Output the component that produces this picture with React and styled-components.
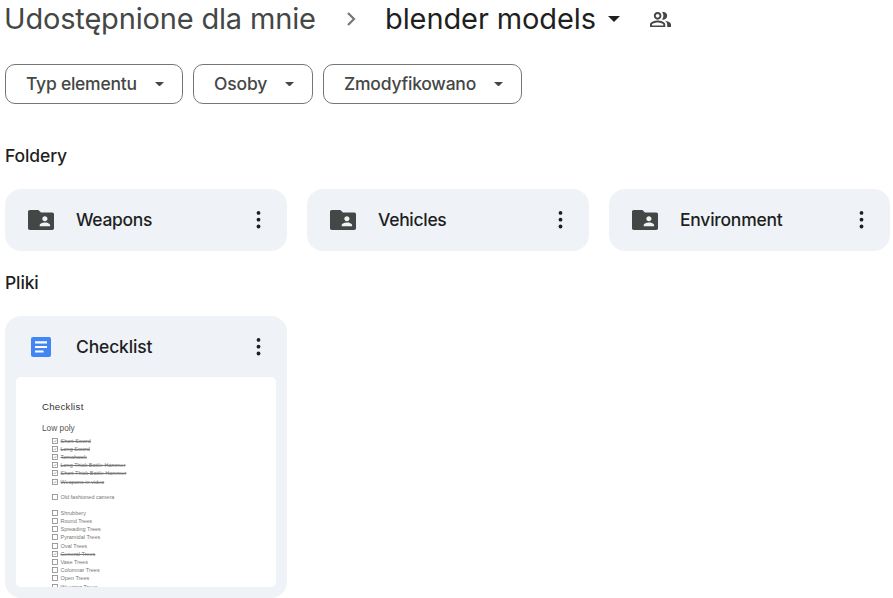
import React from 'react';
import styled, { createGlobalStyle } from 'styled-components';

const GlobalStyle = createGlobalStyle`
  * { box-sizing: border-box; }
  html, body { margin: 0; overflow: hidden; background: #fff; }
  body { font-family: Inter, Roboto, sans-serif; color: #1f1f1f; }
  button { font: inherit; color: inherit; background: none; border: 0; padding: 0; }
`;

const Page = styled.main`
  width: 893px;
  height: 598px;
  padding: 0 3px 0 5px;
  overflow: hidden;
`;

const Breadcrumbs = styled.nav`
  display: flex;
  align-items: center;
  height: 38px;
  font-size: 29px;
  line-height: 38px;
  white-space: nowrap;
`;

const ParentCrumb = styled.a`
  width: 343px;
  margin-left: -1px;
  color: #444746;
  letter-spacing: -0.17px;
`;

const CurrentCrumb = styled.h1`
  margin: 0 0 0 29px;
  width: 223px;
  font-size: 29px;
  font-weight: 400;
  letter-spacing: -0.1px;
`;

const Icon = styled.svg`
  display: block;
  flex: none;
  fill: currentColor;
`;

const ShareButton = styled.button`
  margin: 1px 0 0 30px;
  color: #444746;
`;

const Filters = styled.div`
  display: flex;
  gap: 10px;
  margin-top: 26px;
`;

const Chip = styled.button`
  display: flex;
  align-items: center;
  justify-content: space-between;
  width: ${(p) => p.$width}px;
  height: 40px;
  padding: 0 18px 0 20px;
  border: 1px solid #747775;
  border-radius: 10px;
  color: #444746;
  font-size: 17.5px;
  font-weight: 500;
  letter-spacing: ${(p) => p.$spacing}px;
  white-space: nowrap;
`;

const ChipLabel = styled.span`
  padding-bottom: 2px;
`;

const SectionTitle = styled.h2`
  margin: ${(p) => p.$top}px 0 0;
  height: 24px;
  font-size: 17.5px;
  font-weight: 500;
  line-height: 24px;
  letter-spacing: -0.12px;
`;

const CardGrid = styled.div`
  display: grid;
  grid-template-columns: 282px 282px 281px;
  gap: 20px;
  margin-top: 21px;
`;

const Card = styled.article`
  overflow: hidden;
  border-radius: 16px;
  background: #eff3f8;
`;

const CardHeader = styled.header`
  display: grid;
  grid-template-columns: 26px 1fr 5px;
  align-items: center;
  column-gap: 22px;
  height: ${(p) => p.$height}px;
  padding: 0 26px 0 23px;
`;

const CardIcon = styled.span`
  display: flex;
  justify-content: center;
  color: #444746;
`;

const CardName = styled.span`
  padding-bottom: ${(p) => (p.$raised ? 1 : 0)}px;
  font-size: 17.5px;
  font-weight: 500;
  line-height: 22px;
  letter-spacing: ${(p) => p.$spacing}px;
`;

const Preview = styled.div`
  height: 210px;
  margin: 0 11px;
  margin-bottom: 10.67px;
  padding: 24px 0 0 26px;
  overflow: hidden;
  border-radius: 5px;
  background: #fff;
  color: #333;
  font-family: "Liberation Sans", Arial, sans-serif;
`;

const DocTitle = styled.div`
  height: 12px;
  font-size: 9.6px;
  line-height: 12px;
  letter-spacing: 0.3px;
`;

const DocSubtitle = styled.div`
  height: 10px;
  margin: 10px 0 3.5px;
  color: #555;
  font-size: 8.3px;
  line-height: 10px;
`;

const TaskGroup = styled.ul`
  margin: 0 0 7.3px 10px;
  padding: 0;
  list-style: none;
`;

const Task = styled.li`
  display: flex;
  align-items: center;
  gap: 2.5px;
  height: 8.23px;
  color: ${(p) => (p.$done ? '#777' : '#777')};
  font-size: 5.5px;
  line-height: 8.23px;
  white-space: nowrap;
`;

const TaskText = styled.span`
  text-decoration: ${(p) => (p.$done ? 'line-through' : 'none')};
`;

const DownArrow = ({ width = 9, height = 4.5 }) => (
  <Icon width={width} height={height} viewBox="0 0 10 5" preserveAspectRatio="none">
    <path d="M0 0h10L5 5z" />
  </Icon>
);

const Chevron = () => (
  <Icon width="9" height="14" viewBox="0 0 9 14">
    <path d="M1 1l6 6-6 6" fill="none" stroke="#747775" strokeWidth="2.2" />
  </Icon>
);

const People = () => (
  <Icon width="21" height="15.3" viewBox="1 4 22 16">
    <path d="M16.67 13.13C18.04 14.06 19 15.32 19 17v3h4v-3c0-2.18-3.57-3.47-6.33-3.87zM15 12c2.21 0 4-1.79 4-4s-1.79-4-4-4c-.47 0-.91.1-1.33.24C14.5 5.27 15 6.58 15 8s-.5 2.73-1.33 3.76c.42.14.86.24 1.33.24zM9 12c2.21 0 4-1.79 4-4s-1.79-4-4-4-4 1.79-4 4 1.79 4 4 4zm0-6c1.1 0 2 .9 2 2s-.9 2-2 2-2-.9-2-2 .9-2 2-2zm0 7c-2.67 0-8 1.34-8 4v3h16v-3c0-2.66-5.33-4-8-4zm6 5H3v-.99C3.2 16.29 6.3 15 9 15s5.8 1.29 6 2v1z" />
  </Icon>
);

const SharedFolder = () => (
  <Icon width="26" height="20" viewBox="2 4 20 16" preserveAspectRatio="none">
    <path d="M20.7 6H12l-2-2H3.4C2.6 4 2 4.6 2 5.4v13.2c0 .8.6 1.4 1.4 1.4h17.2c.8 0 1.4-.6 1.4-1.4V7.3c0-.7-.6-1.3-1.3-1.3zM15 9c1.1 0 2 .9 2 2s-.9 2-2 2-2-.9-2-2 .9-2 2-2zm4 8h-8v-1c0-1.33 2.67-2 4-2s4 .67 4 2v1z" />
  </Icon>
);

const DocIcon = () => (
  <Icon width="20" height="20" viewBox="0 0 20 20">
    <rect width="20" height="20" rx="2" fill="#4285f4" />
    <path d="M4 4.3h12v2.2H4zM4 8.9h12v2.2H4zM4 13.4h8.6v2.2H4z" fill="#fff" />
  </Icon>
);

const More = () => (
  <Icon width="5" height="18" viewBox="0 0 5 18">
    <circle cx="2.5" cy="1.9" r="1.9" />
    <circle cx="2.5" cy="8.7" r="1.9" />
    <circle cx="2.5" cy="15.5" r="1.9" />
  </Icon>
);

const Checkbox = ({ done }) => (
  <Icon width="6" height="6" viewBox="0 0 6 6">
    <rect x="0.5" y="0.5" width="5" height="5" fill="none" stroke="#888" strokeWidth="0.8" />
    {done && <path d="M1.6 3l1 1 2-2.2" fill="none" stroke="#888" strokeWidth="0.6" />}
  </Icon>
);

const filters = [
  { label: 'Typ elementu', width: 178, spacing: -0.25 },
  { label: 'Osoby', width: 120, spacing: -0.15 },
  { label: 'Zmodyfikowano', width: 199, spacing: -0.22 },
];

const folders = [
  { name: 'Weapons', spacing: -0.33 },
  { name: 'Vehicles', spacing: -0.3 },
  { name: 'Environment', spacing: -0.24 },
];

const taskGroups = [
  [
    ['Short Sword', true],
    ['Long Sword', true],
    ['Tomahawk', true],
    ['Long Thick Battle Hammer', true],
    ['Short Thick Battle Hammer', true],
    ['Weapons in video', true],
  ],
  [['Old fashioned camera', false]],
  [
    ['Shrubbery', false],
    ['Round Trees', false],
    ['Spreading Trees', false],
    ['Pyramidal Trees', false],
    ['Oval Trees', false],
    ['General Trees', true],
    ['Vase Trees', false],
    ['Columnar Trees', false],
    ['Open Trees', false],
    ['Weeping Trees', false],
  ],
];

export default function App() {
  return (
    <Page>
      <GlobalStyle />
      <Breadcrumbs>
        <ParentCrumb>Udostępnione dla mnie</ParentCrumb>
        <Chevron />
        <CurrentCrumb>blender models</CurrentCrumb>
        <DownArrow width={12} height={6} />
        <ShareButton aria-label="Udostępnione"><People /></ShareButton>
      </Breadcrumbs>

      <Filters>
        {filters.map((f) => (
          <Chip key={f.label} $width={f.width} $spacing={f.spacing}>
            <ChipLabel>{f.label}</ChipLabel>
            <DownArrow />
          </Chip>
        ))}
      </Filters>

      <SectionTitle $top={40}>Foldery</SectionTitle>
      <CardGrid>
        {folders.map((f) => (
          <Card key={f.name}>
            <CardHeader $height={62}>
              <CardIcon><SharedFolder /></CardIcon>
              <CardName $raised $spacing={f.spacing}>{f.name}</CardName>
              <More />
            </CardHeader>
          </Card>
        ))}
      </CardGrid>

      <SectionTitle $top={20}>Pliki</SectionTitle>
      <CardGrid>
        <Card>
          <CardHeader $height={61}>
            <CardIcon><DocIcon /></CardIcon>
            <CardName $spacing={-0.16}>Checklist</CardName>
            <More />
          </CardHeader>
          <Preview>
            <DocTitle>Checklist</DocTitle>
            <DocSubtitle>Low poly</DocSubtitle>
            {taskGroups.map((group) => (
              <TaskGroup key={group[0][0]}>
                {group.map(([text, done]) => (
                  <Task key={text}>
                    <Checkbox done={done} />
                    <TaskText $done={done}>{text}</TaskText>
                  </Task>
                ))}
              </TaskGroup>
            ))}
          </Preview>
        </Card>
      </CardGrid>
    </Page>
  );
}
